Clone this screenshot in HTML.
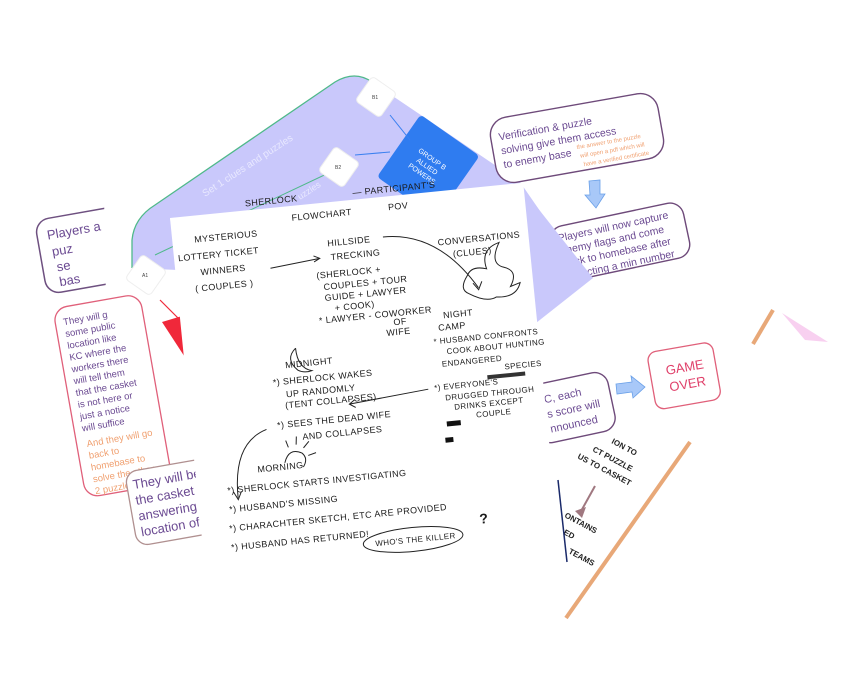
<!DOCTYPE html>
<html><head><meta charset="utf-8"><style>
html,body{margin:0;padding:0;background:#fff;width:841px;height:694px;overflow:hidden}
svg{display:block}
text{font-family:"Liberation Sans",sans-serif}
.h{font-size:9px;fill:#1a1a1a;letter-spacing:0.4px}
.p{fill:#6b4a92}
.o{fill:#f0a070}
</style></head><body>
<svg width="841" height="694" viewBox="0 0 841 694" xmlns="http://www.w3.org/2000/svg">
<g transform="rotate(-10 70 250)">
<rect x="40" y="215" width="95" height="75" rx="14" fill="#fff" stroke="#6e5080" stroke-width="1.5"/>
<text x="50" y="236" font-size="13" class="p">Players a</text>
<text x="52" y="253" font-size="13" class="p">puz</text>
<text x="54" y="269" font-size="13" class="p">se</text>
<text x="54" y="284" font-size="13" class="p">bas</text>
</g>
<polygon points="104,195 134,195 134,300 106,300" fill="#fff"/>
<g transform="rotate(-10 110 380)">
<rect x="66" y="300" width="88" height="192" rx="14" fill="#fff" stroke="#e0607a" stroke-width="1.3"/>
<g font-size="9.5" class="p">
<text x="74" y="318">They will g</text><text x="74" y="330">some public</text><text x="74" y="342">location like</text><text x="74" y="354">KC where the</text><text x="74" y="366">workers there</text><text x="74" y="378">will tell them</text><text x="74" y="390">that the casket</text><text x="74" y="402">is not here or</text><text x="74" y="414">just a notice</text><text x="74" y="426">will suffice</text>
</g>
<g font-size="9.5" class="o">
<text x="76" y="442">And they will go</text><text x="76" y="454">back to</text><text x="76" y="466">homebase to</text><text x="76" y="478">solve the other</text><text x="76" y="490">2 puzzles</text>
</g>
</g>
<g transform="rotate(-10 170 500)">
<rect x="130" y="465" width="110" height="75" rx="12" fill="#fff" stroke="#b09090" stroke-width="1.3"/>
<g font-size="13" class="p"><text x="136" y="483">They will be a</text><text x="136" y="499">the casket gu</text><text x="136" y="515">answering wh</text><text x="136" y="531">location of go</text></g>
</g>
<path d="M132,268 L132,240 Q134,218 155,205 L335,82 Q355,70 372,82 L520,182 L560,240 L170,218 L178,270 Z" fill="#c9c8fb"/>
<path d="M132,268 L132,240 Q134,218 155,205 L335,82 Q355,70 372,82" fill="none" stroke="#4fb98a" stroke-width="1.3"/>
<path d="M155,255 L335,170" stroke="#4fb98a" stroke-width="1" fill="none"/>
<text x="205" y="197" font-size="10" fill="#e8e8ff" transform="rotate(-33 205 197)">Set 1 clues and puzzles</text>
<text x="300" y="200" font-size="9" fill="#e8e8ff" transform="rotate(-33 300 200)">uzzles</text>
<path d="M162,322 L182,316 L190,365 Z" fill="#f0283a"/>
<line x1="160" y1="300" x2="178" y2="318" stroke="#f0283a" stroke-width="1.2"/>
<g transform="rotate(35 428 165)">
<rect x="393" y="128" width="72" height="76" rx="4" fill="#2f7cf0"/>
<text x="428" y="160" font-size="7" fill="#fff" text-anchor="middle">GROUP B</text>
<text x="428" y="169" font-size="7" fill="#fff" text-anchor="middle">ALLIED</text>
<text x="428" y="178" font-size="7" fill="#fff" text-anchor="middle">POWERS</text>
</g>
<line x1="390" y1="115" x2="410" y2="140" stroke="#3a80f0" stroke-width="1"/>
<line x1="355" y1="155" x2="390" y2="152" stroke="#3a80f0" stroke-width="1"/>
<g fill="#fff" stroke="#eee">
<rect x="361" y="82" width="30" height="30" rx="4" transform="rotate(35 376 97)"/>
<rect x="324" y="152" width="30" height="30" rx="4" transform="rotate(35 339 167)"/>
<rect x="131" y="260" width="30" height="30" rx="4" transform="rotate(35 146 275)"/>
</g>
<text x="372" y="99" font-size="5" fill="#444">B1</text>
<text x="335" y="169" font-size="5" fill="#444">B2</text>
<text x="142" y="277" font-size="5" fill="#444">A1</text>
<g transform="rotate(-10 577 138)">
<rect x="492" y="105" width="170" height="66" rx="18" fill="#fff" stroke="#6e4a7a" stroke-width="1.4"/>
<g font-size="10.5" class="p"><text x="500" y="127">Verification &amp; puzzle</text><text x="500" y="141">solving give them access</text><text x="500" y="155">to enemy base</text></g>
<g font-size="6" class="o"><text x="575" y="149">the answer to the puzzle</text><text x="577" y="158">will open a pdf which will</text><text x="579" y="167">have a verified certificate</text></g>
</g>
<path d="M589,181 L600,180 L600,194 L605,194 L596,208 L585,195 L590,195 Z" fill="#a8c8f8" stroke="#6aa0e8" stroke-width="0.8"/>
<g transform="rotate(-12 620 242)">
<rect x="552" y="214" width="136" height="56" rx="14" fill="#fff" stroke="#6e4a7a" stroke-width="1.4"/>
<g font-size="10.5" class="p"><text x="560" y="229">Players will now capture</text><text x="560" y="242">enemy flags and come</text><text x="560" y="255">back to homebase after</text><text x="560" y="268">collecting a min number</text></g>
</g>
<path d="M518,183 L593,278 L536,323 Z" fill="#c9c8fb"/>
<g transform="rotate(-12 580 405)">
<rect x="532" y="376" width="80" height="60" rx="14" fill="#fff" stroke="#6e4a7a" stroke-width="1.4"/>
<g font-size="11" class="p"><text x="546" y="396">C, each</text><text x="546" y="411">s score will</text><text x="546" y="426">nnounced</text></g>
</g>
<path d="M616,384 L632,382 L631,376 L645,387 L633,398 L632,392 L617,394 Z" fill="#a8c8f8" stroke="#6aa0e8" stroke-width="0.8"/>
<g transform="rotate(-10 683 375)">
<rect x="651" y="347" width="66" height="58" rx="9" fill="#fff" stroke="#e0607a" stroke-width="1.3"/>
<text x="686" y="372" font-size="13" fill="#e0406a" text-anchor="middle">GAME</text>
<text x="686" y="389" font-size="13" fill="#e0406a" text-anchor="middle">OVER</text>
</g>
<line x1="566" y1="618" x2="690" y2="442" stroke="#e8a878" stroke-width="4"/>
<line x1="753" y1="344" x2="773" y2="310" stroke="#e8a878" stroke-width="4"/>
<path d="M782,313 L828,342 L805,340 Z" fill="#f8d0f0"/>
<g font-size="8" font-weight="bold" fill="#222">
<text x="611" y="443" transform="rotate(28 611 443)">ION TO</text>
<text x="592" y="451" transform="rotate(28 592 451)">CT PUZZLE</text>
<text x="577" y="458" transform="rotate(28 577 458)">US TO CASKET</text>
<text x="564" y="517" transform="rotate(28 564 517)">ONTAINS</text>
<text x="563" y="534" transform="rotate(28 563 534)">ED</text>
<text x="568" y="553" transform="rotate(28 568 553)">TEAMS</text>
</g>
<line x1="558" y1="480" x2="567" y2="562" stroke="#1a2a6a" stroke-width="1.5"/>
<path d="M595,486 L580,513" stroke="#a07880" stroke-width="2"/>
<path d="M575,511 L582,518 L586,507 Z" fill="#a07880"/>
<g transform="translate(170,218) rotate(-5.7)">
<rect x="0" y="0" width="355" height="390" fill="#fff"/>
<g class="h">
<text x="76" y="-4">SHERLOCK</text><text x="184" y="-4">— PARTICIPANT'S</text>
<text x="121" y="15">FLOWCHART</text><text x="218" y="14">POV</text>
<text x="22" y="27">MYSTERIOUS</text><text x="4" y="44">LOTTERY TICKET</text>
<text x="25" y="60">WINNERS</text><text x="18" y="76">( COUPLES )</text>
<text x="154" y="44">HILLSIDE</text><text x="156" y="58">TRECKING</text>
<text x="140" y="75">(SHERLOCK +</text><text x="146" y="87">COUPLES + TOUR</text>
<text x="146" y="98">GUIDE + LAWYER</text><text x="155" y="109">+ COOK)</text>
<text x="138" y="120">* LAWYER - COWORKER</text><text x="212" y="129">OF</text><text x="204" y="139">WIFE</text>
<text x="264" y="54">CONVERSATIONS</text><text x="278" y="67">(CLUES)</text>
<text x="262" y="127">NIGHT</text><text x="256" y="139">CAMP</text>
<text x="250" y="152" font-size="8">* HUSBAND  CONFRONTS</text>
<text x="262" y="163" font-size="8">COOK ABOUT HUNTING</text>
<text x="256" y="175" font-size="8">ENDANGERED</text><text x="318" y="184" font-size="8">SPECIES</text>
<text x="246" y="198" font-size="8">*) EVERYONE'S</text>
<text x="256" y="209" font-size="8">DRUGGED THROUGH</text>
<text x="264" y="219" font-size="8">DRINKS EXCEPT</text>
<text x="285" y="229" font-size="8">COUPLE</text>
<text x="100" y="161">MIDNIGHT</text>
<text x="86" y="177">*) SHERLOCK WAKES</text><text x="98" y="190">UP RANDOMLY</text><text x="96" y="201">(TENT  COLLAPSES)</text>
<text x="86" y="220">*) SEES  THE DEAD WIFE</text><text x="110" y="234">AND  COLLAPSES</text>
<text x="62" y="262">MORNING</text>
<text x="30" y="280">*) SHERLOCK STARTS INVESTIGATING</text>
<text x="30" y="299">*) HUSBAND'S  MISSING</text>
<text x="28" y="318">*) CHARACHTER SKETCH, ETC ARE PROVIDED</text>
<text x="28" y="337">*) HUSBAND HAS RETURNED!</text>
<text x="172" y="347" font-size="8">WHO'S  THE  KILLER</text>
<text x="278" y="335" font-size="14" font-weight="bold">?</text>
</g>
<g fill="none" stroke="#222" stroke-width="1">
<path d="M95,60 L145,55 M139,52 L145,55 L139,58"/>
<path d="M210,40 Q265,40 300,100 M295,95 L300,102 L304,94"/>
<path d="M290,105 q-10,-5 0,-18 q5,-10 20,-5 q-5,-20 15,-25 q-12,20 2,25 q15,5 5,20 l10,-3 q-5,15 -25,12 q-10,5 -27,-6"/>
<path d="M112,142 q-12,10 0,22 q6,4 14,2 q-14,-4 -14,-24"/>
<path d="M240,196 L160,203 M166,199 L160,203 L166,207"/>
<path d="M75,220 Q40,230 40,285 M36,279 L40,287 L44,279"/>
<path d="M90,255 q5,-15 18,-8 q6,6 0,14"/>
<path d="M95,240 l-2,-7 M103,238 l1,-8 M110,242 l6,-6 M114,250 l8,-2"/>
<ellipse cx="210" cy="344" rx="50" ry="12"/>
</g>
<rect x="255" y="230" width="14" height="5" fill="#111"/>
<rect x="300" y="188" width="38" height="4" fill="#333"/>
<rect x="252" y="246" width="8" height="5" fill="#111"/>
</g>
</svg>
</body></html>
